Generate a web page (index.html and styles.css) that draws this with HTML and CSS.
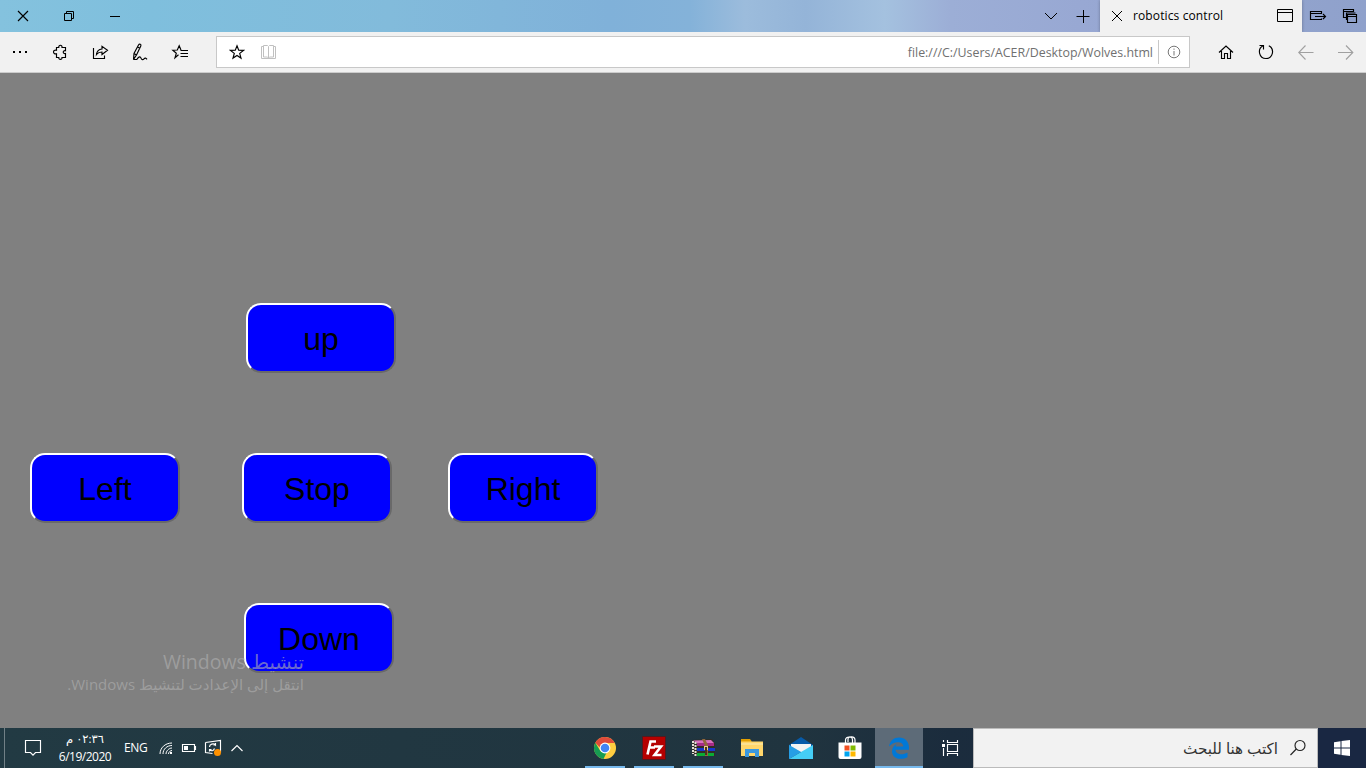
FILE: index.html
```
<!DOCTYPE html>
<html lang="en">
<head>
<meta charset="utf-8">
<title>robotics control</title>
<link rel="stylesheet" href="styles.css">
</head>
<body>
<header class="titlebar">
  <div class="cell wide"><svg width="12" height="12" viewBox="0 0 12 12"><path class="bold" d="M1 1l10 10M11 1L1 11"/></svg></div>
  <div class="cell wide"><svg width="12" height="12" viewBox="0 0 12 12"><path d="M1.500 3.500h7v7h-7zM3.500 3.500v-2h7v7h-2"/></svg></div>
  <div class="cell wide"><svg width="12" height="12" viewBox="0 0 12 12"><path d="M1 6.500h10"/></svg></div>
  <div class="spacer"></div>
  <div class="cell tool"><svg width="14" height="14" viewBox="0 0 14 14"><path d="M1 4l6 6 6-6"/></svg></div>
  <div class="cell tool plus"><svg width="14" height="14" viewBox="0 0 14 14"><path d="M.5 7.500h13M7.500 1v13"/></svg></div>
  <div class="tab">
    <svg width="12" height="12" viewBox="0 0 12 12"><path d="M1 1l10 10M11 1L1 11"/></svg>
    <span class="tab-title">robotics control</span>
    <svg width="17" height="14" viewBox="0 0 17 14"><path d="M.5.5h15v12H.5zM.5 3.500h15"/></svg>
  </div>
  <div class="cell tool"><svg width="18" height="14" viewBox="0 0 18 14"><path class="bold" d="M12.500 5V2.500h-11v8h11V9.500M1.500 4.500h11M6 7.500h10.500M14 5l2.500 2.500L14 10"/></svg></div>
  <div class="cell tool"><svg width="16" height="16" viewBox="0 0 16 16"><path class="bold" d="M4 9.500H1.500v-8h10V4M1.500 3.500h10M4.500 12v-7h9M5.500 6.500h9v8h-9zM5.500 8.500h9"/></svg></div>
</header>
<nav class="toolbar">
  <div class="cell"><svg width="16" height="4" viewBox="0 0 16 4"><path class="fill" d="M1 1h2v2H1zM7 1h2v2H7zM13 1h2v2h-2z"/></svg></div>
  <div class="cell"><svg width="16" height="16" viewBox="0 0 16 16"><path class="bold" d="M4.500 3.500h2.300c-.6-3 3.800-3 3.200 0h3.500v3.200c-3-.7-3 3.500 0 2.800v4H10c.6 2.500-3.800 2.500-3.200 0H4.500V9.800c-4 .8-4-4.400 0-3.500z"/></svg></div>
  <div class="cell"><svg width="17" height="16" viewBox="0 0 17 16"><path class="bold" d="M1.500 4v10.500h11V11.500M4.500 10.500c.4-3.500 2.500-5.200 5.500-5.500V2.300L15.500 6.300 10 10.500V8C7.500 8 6 8.500 4.500 10.500z"/></svg></div>
  <div class="cell"><svg width="18" height="18" viewBox="0 0 18 18"><path class="bold" d="M2.500 16.500l.5-6 4.500-8.500c1-1.600 3-.5 2.300 1L5.500 12zM3 10.500L5.500 12M6.500 4l2.500 1.300"/><path class="bold" d="M2.500 16.500h3.300c2.200-3.500 3.700-3 4.200-1.300s2 1.800 3 .6 2-.8 3 .5"/></svg></div>
  <div class="cell"><svg width="18" height="16" viewBox="0 0 18 16"><path class="bold" d="M7.500 10.800L4 13.800l1.300-4.600-3.500-2.900 4.500-.3 1.900-4.200L10 6M9.500 6.500H17M9.500 9.500H17M9.500 12.500H17"/></svg></div>
  <div class="address">
    <svg width="16" height="16" viewBox="0 0 16 16"><path class="bold" d="M8 1.800l1.700 4.500 4.800.1-3.800 3 1.300 4.700L8 11.400l-4 2.700 1.300-4.700-3.800-3 4.800-.1z"/></svg>
    <svg class="book" width="16" height="15" viewBox="0 0 16 15"><path d="M7.500 13V2M7.500 1.500L6.500.5h-4V12h4l1 1 1-1h4V.5h-4zM2.500 1.500h-2v12h14v-12h-2"/></svg>
    <span class="url">file:///C:/Users/ACER/Desktop/Wolves.html</span>
    <i class="rule"></i>
    <svg class="info" width="14" height="14" viewBox="0 0 14 14"><circle cx="7" cy="7" r="5.800"/><path d="M7 6v4.500M7 3.500v1.300"/></svg>
  </div>
  <div class="cell"><svg width="16" height="16" viewBox="0 0 16 16"><path class="bold" d="M1 8.500l7-6.500 7 6.500M3.500 7v7.500h3v-5h3v5h3V7"/></svg></div>
  <div class="cell"><svg width="16" height="16" viewBox="0 0 16 16"><path class="bold" d="M5 1.800C-1 5 1 14.500 8 14.500S17 5 10.800 1.800M1.500 1.500h4v4"/></svg></div>
  <div class="cell dim"><svg width="16" height="16" viewBox="0 0 16 16"><path class="bold" d="M15.500 8.500H1M7.500 1.500l-6.800 7 6.800 7"/></svg></div>
  <div class="cell dim"><svg width="16" height="16" viewBox="0 0 16 16"><path class="bold" d="M0 8.500H14.500M8 1.500l6.800 7-6.800 7"/></svg></div>
</nav>
<main class="page">
  <div class="row up"><button class="pad">up</button></div>
  <div class="row middle"><button class="pad">Left</button><button class="pad">Stop</button><button class="pad">Right</button></div>
  <div class="row down"><button class="pad">Down</button></div>
  <aside class="watermark" dir="rtl">
    <p class="wm-title">تنشيط Windows</p>
    <p class="wm-text">انتقل إلى الإعدادت لتنشيط Windows.</p>
  </aside>
</main>
<footer class="taskbar">
  <i class="peek"></i>
  <svg class="note" width="18" height="18" viewBox="0 0 18 18"><path class="bold" d="M1.500 1.500h15v12h-5L9 16.200 6.500 13.500h-5z"/></svg>
  <div class="clock"><span class="time" dir="rtl">٠٢:٣٦ م</span><span class="date">6/19/2020</span></div>
  <span class="lang">ENG</span>
  <div class="tray">
    <svg width="16" height="16" viewBox="0 0 16 16"><path d="M2 14C2 8 7 3 14 3M5 14c0-5 4-8.500 9-8.500M8 14c0-3 3-6 6-6M10.500 14c0-2 2-3.500 3.500-3.500"/><path class="fill" d="M12 12h2v2h-2z"/></svg>
    <svg width="16" height="16" viewBox="0 0 16 16"><path class="bold" d="M1.500 4.500h12v7h-12zM14.500 6v4"/><path class="fill" d="M3 6h4v4H3z"/></svg>
    <svg width="18" height="18" viewBox="0 0 18 18"><path class="bold" d="M1.500 3.500l15-2v12M1.500 3.500v10l7 1M5.500 8c0-3 4-4 6-2V4M11.500 6h-2M5.500 12.500v-2h2M5.500 10.500c2 2 4 1.500 5-1"/><circle class="art" cx="13.500" cy="13.500" r="3.500" fill="#ff9100"/></svg>
    <svg width="14" height="14" viewBox="0 0 14 14"><path class="bold" d="M1.500 10L7 4.500l5.500 5.500"/></svg>
  </div>
  <div class="apps">
    <div class="app running"><svg width="24" height="24" viewBox="0 0 24 24" class="art"><circle cx="12" cy="12" r="11" fill="#ffcd40"/><path fill="#df4b3b" d="M2.300 6.700A11 11 0 0 1 21.700 7H12l-5 4.500z"/><path fill="#179c52" d="M2.300 6.700l5.200 8.500 6 1.500-3 6.200A11 11 0 0 1 2.300 6.700z"/><circle cx="12" cy="12" r="5.400" fill="#fff"/><circle cx="12" cy="12" r="4.300" fill="#4285f4"/></svg></div>
    <div class="app running"><svg width="24" height="24" viewBox="0 0 24 24" class="art"><path fill="#b50000" d="M1 1h22v22H1z"/><path class="dots" d="M.5.5h23v23H.5z"/><path class="fz" d="M14 5.500H8.500L5.500 18.500M7 11.500h6"/><path class="fz" d="M12 10.500h7L12.500 19h7"/></svg></div>
    <div class="app running"><svg width="24" height="24" viewBox="0 0 24 24" class="art"><path fill="#332c25" d="M1 4l20-1 3 5v12H5l-4-3z"/><path fill="#a72c87" d="M6 7h17v3H6z"/><path fill="#d873be" d="M2 4.500l18-.5 3 3H6z"/><path fill="#1737cc" d="M6 12h18v3H6z"/><path fill="#0aac33" d="M6 17h17v3H6z"/><path class="pages" d="M2 5v13M4.500 6v14"/><path fill="#91683c" d="M11 3h3l3 6v11h-3V10z"/><path fill="#e8cc89" d="M13 10h4v4h-4z"/><path fill="#4b301d" d="M14 11h2v8h-2z"/></svg></div>
    <div class="app"><svg width="24" height="24" viewBox="0 0 24 24" class="art"><path fill="#e5a000" d="M1 3h9l1.500 2V8H1z"/><path fill="#ffd66b" d="M1 5.500h22V20H1z"/><path fill="#fce191" d="M1 7h22v2H1z"/><path fill="#3b98df" d="M5 13h14v8h-4v-4H9v4H5z"/></svg></div>
    <div class="app"><svg width="26" height="26" viewBox="0 0 26 26" class="art"><path fill="#075aa8" d="M1 10L13 2l12 8v7H1z"/><path fill="#f3f3f3" d="M3 9h20v8H3z"/><path fill="#2daae8" d="M1 10l12 7-12 7z"/><path fill="#45cef6" d="M25 10v14H1z"/><path fill="#1f91e4" d="M1 10l12 7L1 24z" opacity=".5"/></svg></div>
    <div class="app"><svg width="24" height="24" viewBox="0 0 24 24" class="art"><path class="handle" d="M7.500 7V4c0-4 7-4 7 0v3M10 6V3c0-3 7-3 7 1v3"/><path fill="#fff" d="M.5 6.500h23V21q0 2-2 2h-19q-2 0-2-2z"/><path fill="#f25022" d="M6.500 9.500h5v5h-5z"/><path fill="#7fba00" d="M12.500 9.500h5v5h-5z"/><path fill="#00a4ef" d="M6.500 15.500h5v5h-5z"/><path fill="#ffb900" d="M12.500 15.500h5v5h-5z"/></svg></div>
    <div class="app active"><svg width="22" height="24" viewBox="0 0 22 24" class="art"><path fill="#0078d7" d="M1 10.500C2 4.500 6 1.500 11 1.500c6 0 10 4 10 10v2.300H7.500c.4 5 7 5.700 12 2.700v4.700c-7 3.500-15.500 1.500-15.500-6 0-3.500 2-6 5-7.500-1 1-1.500 2-1.500 2.800h7.800c0-5.500-9.300-6-14.300 0z"/></svg></div>
    <div class="app view"><svg width="18" height="18" viewBox="0 0 18 18"><path class="bold" d="M2.500 1v2M2.500 9v8M6.500 1v2.500h10V1M6.500 17v-2.500h10V17M6.500 5.500h10v7h-10z"/><path class="fill" d="M1 5h3v3H1z"/></svg></div>
  </div>
  <div class="search" dir="rtl"><svg width="18" height="18" viewBox="0 0 18 18"><circle class="bold" cx="11" cy="6.500" r="5"/><path class="bold" d="M7.300 10L1.500 16"/></svg><span class="hint">اكتب هنا للبحث</span></div>
  <div class="start"><svg width="16" height="16" viewBox="0 0 16 16" class="art"><path fill="#fff" d="M0 2.200L6.500 1.300v6.200H0zM7.500 1.100L16 0v7.500H7.500zM0 8.500h6.500v6.200L0 13.800zM7.500 8.500H16V16l-8.500-1.100z"/></svg></div>
</footer>
</body>
</html>
```

FILE: styles.css
```
* { box-sizing: border-box; }
body {
  margin: 0;
  width: 1366px;
  height: 768px;
  overflow: hidden;
  display: flex;
  flex-direction: column;
  background: #808080;
  font-family: "Open Sans", "DejaVu Sans", sans-serif;
  color: #000;
}
svg { flex: none; display: block; fill: none; stroke: #000; stroke-width: 1; }
.fill { fill: #000; stroke: none; }
.bold { stroke-width: 1.150; }
.art { stroke: none; }
.cell { width: 40px; display: flex; align-items: center; justify-content: center; }
.spacer { flex: 1; }

.titlebar {
  height: 32px;
  flex: none;
  display: flex;
  background: linear-gradient(90deg, #84c2de 0, #7fbfdd 150px, #82bbdb 390px, #80b1d9 610px, #84b2d9 690px, #9cbcdc 745px, #94b4d8 806px, #a4c1df 885px, #9caed6 950px, #98a8d3 1080px, #8fa1cb 1366px);
}
.wide { width: 46px; }
.tool { width: 32px; }
.plus { width: 33px; padding-right: 1px; }
.tab {
  width: 202px;
  display: flex;
  align-items: center;
  padding: 0 8px 0 11px;
  background: #f1f1f1;
  box-shadow: 0 0 3px rgba(0, 0, 0, .3);
  clip-path: inset(0 -4px);
}
.tab-title { flex: 1; margin-left: 10px; font-size: 12px; line-height: 16px; letter-spacing: .12px; }

.toolbar {
  height: 41px;
  flex: none;
  display: flex;
  background: #f1f1f1;
  border-bottom: 1px solid #ccc;
}
.address {
  width: 974px;
  height: 32px;
  margin: 4px 16px 0;
  display: flex;
  align-items: center;
  padding: 0 8px 0 12px;
  background: #fff;
  border: 1px solid #c8c8c8;
}
.book { margin-left: 16px; stroke: #c0c0c0; }
.url { flex: 1; text-align: right; font-size: 12.400px; color: #707070; white-space: nowrap; }
.rule { width: 1px; height: 24px; margin: 0 8px 0 5px; background: #c8c8c8; }
.info { stroke: #777; }
.dim svg { stroke: #a0a0a0; }

.page { flex: 1; min-height: 0; position: relative; padding-top: 230px; }
.row { display: flex; height: 70px; margin-bottom: 80px; }
.up { padding-left: 246px; }
.middle { padding-left: 30px; }
.middle .pad { margin-right: 56px; }
.middle .pad:first-child { margin-right: 62px; }
.down { padding-left: 244px; margin-bottom: 0; }
.pad {
  width: 150px;
  height: 70px;
  padding: 3px 0 0;
  border: 2px solid;
  border-color: #fff #696969 #696969 #fff;
  border-radius: 15px;
  background: #00f;
  color: #000;
  font: 32px "Liberation Sans", Arial, sans-serif;
}
.watermark {
  position: absolute;
  right: 1062px;
  top: 575px;
  color: rgba(176, 176, 176, .62);
  white-space: nowrap;
}
.watermark p { margin: 0; }
.wm-title { font-size: 19.500px; line-height: 28px; }
.wm-text { font-size: 15px; line-height: 16px; }

.taskbar {
  height: 40px;
  flex: none;
  display: flex;
  background: linear-gradient(90deg, #223a43, #20343f 800px, #1b2c3d 950px, #192742);
  color: #fff;
}
.taskbar svg { stroke: #fff; }
.taskbar .fill { fill: #fff; }
.taskbar .fill, .taskbar .art { stroke: none; }
.art .dots { stroke: #820000; stroke-dasharray: 1 1; }
.art .fz { stroke: #fff; stroke-width: 2.600; }
.art .pages { stroke: #e4e0d8; stroke-width: 2; stroke-dasharray: 2 1; }
.art .handle { stroke: #fff; stroke-width: 1.200; }
.peek { width: 1px; margin-left: 4px; background: #718086; }
.note { margin: 11px 0 0 19px; }
.clock {
  width: 72px;
  margin-left: 7px;
  display: flex;
  flex-direction: column;
  align-items: center;
  font-size: 12px;
  line-height: 17px;
  padding-top: 3px;
}
.time { font-size: 11.500px; margin-top: -1px; height: 18px; }
.date { letter-spacing: -.5px; }
.lang { width: 25px; margin-left: 3px; font-size: 12px; line-height: 39px; letter-spacing: -.4px; }
.tray { width: 88px; margin-left: 9px; display: flex; align-items: center; gap: 7px; }
.tray svg:last-child { margin-left: 1px; }
.apps { margin-left: 335px; display: flex; gap: 1px; }
.app { width: 48px; display: flex; align-items: center; justify-content: center; }
.running { background: linear-gradient(#76b9ed, #76b9ed) 50% 100% / 40px 2px no-repeat; }
.active { background: linear-gradient(#76b9ed, #76b9ed) 0 100% / 48px 2px no-repeat #5d6b78; }
.view { width: 50px; padding-left: 2px; }
.search {
  flex: 1;
  display: flex;
  align-items: center;
  padding-right: 10px;
  background: #f2f2f2;
  border: 1px solid #bbb;
  color: #333;
}
.view { width: 49px; }
.taskbar .search svg { stroke: #222; }
.hint { margin-right: 11px; font-size: 15.200px; white-space: nowrap; }
.start { width: 48px; display: flex; align-items: center; justify-content: center; background: #192742; }
```
